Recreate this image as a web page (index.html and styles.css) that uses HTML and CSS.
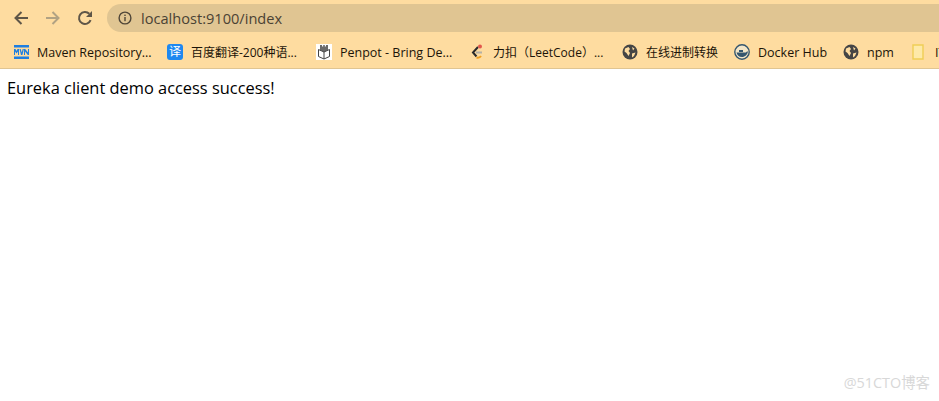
FILE: index.html
```html
<!DOCTYPE html>
<html lang="zh">
<head>
  <meta charset="UTF-8">
  <title>localhost:9100/index</title>
  <link rel="stylesheet" href="styles.css">
</head>
<body>
  <div class="toolbar">
    <svg class="nav-icon" width="16" height="16" viewBox="0 0 16 16"><path d="M15 8H2.500M8.500 2 2.500 8l6 6" fill="none" stroke="#5f5648" stroke-width="2"/></svg>
    <svg class="nav-icon" width="16" height="16" viewBox="0 0 16 16"><path d="M1 8h12.500M7.500 2l6 6-6 6" fill="none" stroke="#b1a283" stroke-width="2"/></svg>
    <svg class="nav-icon" width="16" height="16" viewBox="0 0 16 16"><path d="M13.600 10.200A6 6 0 1 1 12.300 3.800" fill="none" stroke="#5f5648" stroke-width="2"/><path d="M15 1v6H9z" fill="#5f5648"/></svg>
    <div class="omnibox">
      <svg width="14" height="14" viewBox="0 0 14 14"><circle cx="7" cy="7" r="5.900" fill="none" stroke="#4f4638" stroke-width="1.400"/><rect x="6.300" y="6" width="1.400" height="4.200" fill="#4f4638"/><rect x="6.300" y="3.600" width="1.400" height="1.400" fill="#4f4638"/></svg>
      <span class="url">localhost:9100/index</span>
    </div>
  </div>

  <div class="bookmarks">
    <div class="bookmark latin b-maven">
      <svg width="15" height="16" viewBox="0 0 15 16"><path d="M0 1h15v2.500H0zM0 12.500h15V15H0zM0 5h1.500l1 2 1-2H5v6H4V7.500L2.500 9.500 1 7.500V11H0zM5.500 5h1.200l1 3.500 1-3.500h1.200l-1.500 6h-1.400zM10 5h1.200L14 8.500V5h1v6h-1.200L11 7.500V11h-1z" fill="#1f7fe0"/></svg>
      <span>Maven Repository...</span>
    </div>
    <div class="bookmark b-baidu">
      <span class="yi-icon">译</span>
      <span>百度翻译-200种语...</span>
    </div>
    <div class="bookmark latin b-penpot">
      <svg width="16" height="16" viewBox="0 0 16 16"><rect width="16" height="16" fill="#fff"/><path d="M4 1h2v1.500h1.200V1h1.600v1.500H10V1h2v5L8 8 4 6z" fill="#6b6b6b"/><path d="M2.500 5.500 8 8l5.500-2.500v7L8 15l-5.500-2.500zM8 8v7" fill="none" stroke="#444" stroke-width="1"/></svg>
      <span>Penpot - Bring De...</span>
    </div>
    <div class="bookmark b-leet">
      <svg width="16" height="16" viewBox="0 0 16 16"><path d="M9 3 4 8.500l3.500 4" fill="none" stroke="#2a2a2a" stroke-width="2"/><path d="M7.500 13.500c2 .5 3.500 0 4.500-1.500" fill="none" stroke="#f0a020" stroke-width="2"/><path d="M7 8.500h6" stroke="#b5b0a5" stroke-width="2"/><circle cx="11" cy="2.500" r="2" fill="#e2574c"/></svg>
      <span>力扣（LeetCode）...</span>
    </div>
    <div class="bookmark b-convert">
      <svg width="16" height="16" viewBox="0 0 16 16"><circle cx="8" cy="8" r="7.500" fill="#454545"/><path d="M3 4.500 6.500 3 8 5 6.500 7l1.500 2-1.500 3L4.500 9 2.500 7.500zM10 3l2.500 1.500L11 6.500zM10 9.500l3.500-1L12 12l-2 1.500z" fill="#fedca0"/></svg>
      <span>在线进制转换</span>
    </div>
    <div class="bookmark latin b-docker">
      <svg width="16" height="16" viewBox="0 0 16 16"><circle cx="8" cy="8" r="7.200" fill="#f3e6c8" stroke="#35566e" stroke-width="1.400"/><path d="M2.500 8.500H12c.5-1 1-1.200 2-1-.5 3-3 5.500-6 5.500-3 0-5-2-5.500-4.500z" fill="#35566e"/><rect x="5" y="6" width="4" height="2" fill="#35566e"/></svg>
      <span>Docker Hub</span>
    </div>
    <div class="bookmark latin b-npm">
      <svg width="16" height="16" viewBox="0 0 16 16"><circle cx="8" cy="8" r="7.500" fill="#454545"/><path d="M3 4.500 6.500 3 8 5 6.500 7l1.500 2-1.500 3L4.500 9 2.500 7.500zM10 3l2.500 1.500L11 6.500zM10 9.500l3.500-1L12 12l-2 1.500z" fill="#fedca0"/></svg>
      <span>npm</span>
    </div>
    <div class="bookmark latin b-it">
      <svg width="12" height="16" viewBox="0 0 12 16"><path d="M1 1h10v14H1z" fill="#fee9a8" stroke="#efce55" stroke-width="1.400"/></svg>
      <span>IT</span>
    </div>
  </div>

  <p class="message">Eureka client demo access success!</p>
  <div class="watermark">@51CTO博客</div>
</body>
</html>
```

FILE: styles.css
```css
html, body {
  margin: 0;
  height: 100%;
  overflow: hidden;
}
body {
  font-family: "Open Sans", "Noto Sans CJK SC", sans-serif;
  background: #fff;
  color: #000;
}
.toolbar {
  height: 36px;
  background: #fedca0;
  display: flex;
  align-items: center;
  padding-left: 13px;
}
.nav-icon {
  margin-right: 16px;
  flex: none;
}
.omnibox {
  flex: 1;
  height: 28px;
  margin-left: -2px;
  border-radius: 14px 0 0 14px;
  background: #e0c592;
  display: flex;
  align-items: center;
  padding-left: 11px;
  gap: 9px;
}
.url {
  font-size: 14.6px;
  color: #4a4234;
}
.bookmarks {
  height: 32px;
  background: #fedca0;
  border-bottom: 1px solid #e0c592;
  display: flex;
  align-items: center;
  overflow: hidden;
  white-space: nowrap;
  padding-left: 14px;
}
.bookmark {
  display: flex;
  align-items: center;
  gap: 8px;
  font-size: 12px;
  flex: none;
  color: #1c1408;
}
.latin {
  font-size: 12.5px;
}
.b-maven { width: 153px; }
.b-baidu { width: 149px; }
.b-penpot { width: 153px; }
.b-leet { width: 153px; }
.b-convert { width: 112px; }
.b-docker { width: 109px; }
.b-npm { width: 69px; }
.b-it { gap: 11px; }
.yi-icon {
  width: 16px;
  height: 16px;
  border-radius: 3px;
  background: #1e88f0;
  color: #fff;
  font-size: 12px;
  line-height: 16px;
  text-align: center;
}
.message {
  margin: 0;
  padding: 8px 7px;
  font-size: 16.4px;
  line-height: 22px;
}
.watermark {
  position: absolute;
  right: 9px;
  bottom: 9px;
  font-size: 14.4px;
  color: #d8d8d8;
}
```
